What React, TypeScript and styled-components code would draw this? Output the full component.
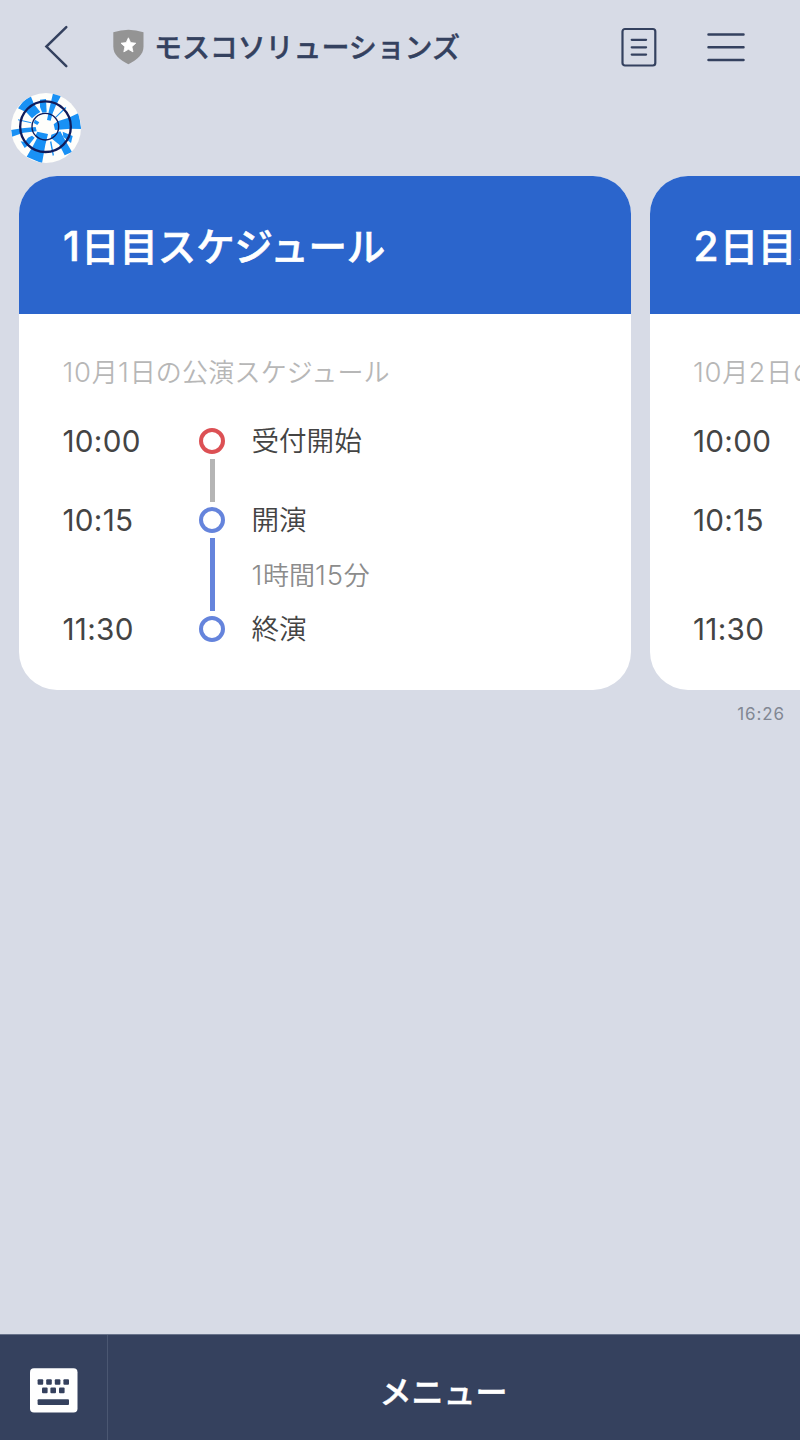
import React from 'react';
import styled, { createGlobalStyle } from 'styled-components';

const GlobalStyle = createGlobalStyle`
  * { box-sizing: border-box; }
  body {
    margin: 0;
    background: #d7dbe6;
    font-family: Inter, 'Noto Sans CJK JP', sans-serif;
    overflow: hidden;
  }
`;

const Screen = styled.div`
  width: 800px;
  height: 1440px;
  display: flex;
  flex-direction: column;
  overflow: hidden;
  background: #d7dbe6;
`;

const TopBar = styled.header`
  height: 93px;
  flex: none;
  display: flex;
  align-items: flex-start;
  padding: 25px 55px 0 44px;
  color: #34415f;
  svg { display: block; flex: none; }
`;

const Shield = styled.svg`
  margin: 4px 0 0 44px;
`;

const ChatName = styled.h1`
  margin: 1px auto 0 10px;
  font-size: 28px;
  line-height: 44px;
  font-weight: 500;
  letter-spacing: -0.1px;
  -webkit-text-stroke: 0.4px currentColor;
  white-space: nowrap;
`;

const Actions = styled.div`
  display: flex;
  gap: 50px;
  padding-top: 2px;
`;

const AvatarRow = styled.div`
  height: 82.5px;
  flex: none;
  padding-left: 11px;
`;

const Carousel = styled.div`
  display: flex;
  flex: none;
  gap: 19px;
  padding-left: 19px;
`;

const Card = styled.article`
  flex: none;
  width: 611.5px;
  height: 514.5px;
  border-radius: 38px;
  overflow: hidden;
  background: #fff;
`;

const CardHeader = styled.div`
  height: 138.5px;
  padding: 0 44px;
  display: flex;
  align-items: center;
  background: #2b65cc;
`;

const CardTitle = styled.h2`
  margin: 5px 0 0;
  color: #fff;
  font-size: 38.5px;
  line-height: 56px;
  font-weight: 500;
  letter-spacing: -0.15px;
  -webkit-text-stroke: 0.6px currentColor;
  white-space: nowrap;
`;

const TitleNum = styled.span`
  font-size: 40.5px;
  letter-spacing: 1.3px;
`;

const CardBody = styled.div`
  padding: 38px 43.4px 0;
`;

const Subtitle = styled.p`
  margin: 0 0 29px;
  color: #b7b7b7;
  font-size: 26px;
  line-height: 40px;
  height: 40px;
  font-weight: 350;
  letter-spacing: 0.2px;
  white-space: nowrap;
`;

const Num = styled.span`
  font-size: 27.5px;
  letter-spacing: 0.8px;
`;

const Step = styled.div`
  display: grid;
  grid-template-columns: 137px 26px 1fr;
  align-items: center;
  height: 40px;
  white-space: nowrap;
`;

const Gap = styled(Step)<{ $height: number }>`
  height: ${(p) => p.$height}px;
`;

const Time = styled.span`
  color: #444;
  font-size: 29.7px;
  line-height: 40px;
  font-weight: 400;
  letter-spacing: 0.3px;
`;

const Label = styled.span`
  margin-left: 26px;
  color: #444;
  font-size: 27.6px;
  line-height: 40px;
  font-weight: 350;
`;

const Duration = styled(Label)`
  color: #8c8c8c;
  font-size: 26px;
`;

const Ring = styled.i<{ $color: string }>`
  width: 26px;
  height: 26px;
  border: 4px solid ${(p) => p.$color};
  border-radius: 50%;
`;

const Line = styled.i<{ $color: string; $height: number }>`
  grid-column: 2;
  justify-self: center;
  width: 4.5px;
  height: ${(p) => p.$height}px;
  margin-top: -2px;
  background: ${(p) => p.$color};
`;

const SentAt = styled.time`
  align-self: flex-end;
  margin: 13px 15px 0 0;
  color: #818793;
  font-size: 17px;
  line-height: 22px;
  letter-spacing: 0.9px;
`;

const BottomBar = styled.footer`
  display: flex;
  flex: none;
  height: 106px;
  margin-top: auto;
  background: #35415e;
  border-top: 1px solid #68738b;
`;

const KeyboardButton = styled.div`
  width: 108px;
  padding: 33px 0 0 30px;
  border-right: 1px solid #4b5772;
`;

const MenuButton = styled.div`
  flex: 1;
  padding: 35px 21px 0 0;
  text-align: center;
  color: #fff;
  font-size: 32px;
  line-height: 46px;
  font-weight: 500;
  -webkit-text-stroke: 0.5px currentColor;
`;

const Avatar = () => (
  <svg width="70" height="70" viewBox="3 3 210 210">
    <defs>
      <clipPath id="disc"><circle cx="108" cy="108" r="105" /></clipPath>
    </defs>
    <circle cx="108" cy="108" r="105" fill="#fefefb" />
    <g clipPath="url(#disc)" fill="#1991f5">
      <path d="M24 49 40 28 62 12 72 36 91 60 80 67 66 79 49 61Z" />
      <path d="M130 0 154 10 138 40 128 64 122 86 111 84 118 50Z" />
      <path d="M90 23 108 21 110 61 97 62 90 45Z" />
      <path d="M206 63 214 111 182 110 135 114 131 97 143 88 176 77Z" />
      <path d="M82 119 114 126 106 158 96 214 50 194 70 160 81 139 76 132Z" />
      <path d="M3 114 36 109 77 105 80 118 40 122 6 134Z" />
      <path d="M124 128 151 118 163 140 186 180 164 190 148 158 122 137Z" />
      <path d="M66 131 74 137 59 156 44 168 32 148 45 150 54 137Z" />
      <path d="M158 119 188 132 183 153 160 135Z" />
      <path d="M75 83 88 91 82 99 71 93Z" />
      <path d="m166 45 3 3-31 29-2-2ZM24 82l40 9v3L24 85ZM120 149l4-1 8 42-4 1Z" />
    </g>
    <g fill="none" stroke="#101c5b">
      <circle cx="106.500" cy="104" r="76" strokeWidth="7" />
      <circle cx="106" cy="104" r="40" strokeWidth="4" />
    </g>
  </svg>
);

const BackIcon = () => (
  <svg width="25" height="44" viewBox="0 0 25 44" fill="none" stroke="currentColor" strokeWidth="2.5" strokeLinecap="round">
    <path d="M22.3 2.2 2.4 21.6 22.3 41.2" />
  </svg>
);

const NotesIcon = () => (
  <svg width="36" height="40" viewBox="0 0 36 40" fill="none" stroke="currentColor" strokeWidth="2.2" strokeLinecap="round">
    <rect x="1.5" y="2" width="32.8" height="36.5" rx="2.5" />
    <path d="M10.7 12.8h14.4M10.7 20.3h14.4M10.7 27.6h14.4" />
  </svg>
);

const MenuIcon = () => (
  <svg width="38" height="40" viewBox="0 0 38 40" fill="none" stroke="currentColor" strokeWidth="2.5" strokeLinecap="round">
    <path d="M1.5 7.4h35M1.5 20.2h35M1.5 33h35" />
  </svg>
);

const KeyboardIcon = () => (
  <svg width="48" height="45" viewBox="0 0 48 45">
    <rect x="0" y="0.3" width="47.5" height="44.2" rx="4" fill="#fff" />
    <g fill="#35415e">
      {[7.6, 16.2, 24.8, 33.4].map((x) => <rect key={x} x={x} y="11.2" width="5.6" height="5.6" rx="1" />)}
      {[12, 20.4, 29].map((x) => <rect key={x} x={x} y="19.6" width="5.6" height="5.6" rx="1" />)}
      <rect x="7.6" y="31.3" width="31.4" height="5.6" rx="1" />
    </g>
  </svg>
);

const GREY = '#b5b5b5';
const BLUE = '#6584dc';
const RED = '#dc5054';

const DayCard = ({ day }: { day: number }) => (
  <Card>
    <CardHeader><CardTitle><TitleNum>{day}</TitleNum>日目スケジュール</CardTitle></CardHeader>
    <CardBody>
      <Subtitle><Num>10</Num>月<Num>{day}</Num>日の公演スケジュール</Subtitle>
      <Step><Time>10:00</Time><Ring $color={RED} /><Label>受付開始</Label></Step>
      <Gap $height={39}><Line $color={GREY} $height={43} /></Gap>
      <Step><Time>10:15</Time><Ring $color={BLUE} /><Label>開演</Label></Step>
      <Gap $height={69}><Line $color={BLUE} $height={73} /><Duration><Num>1</Num>時間<Num>15</Num>分</Duration></Gap>
      <Step><Time>11:30</Time><Ring $color={BLUE} /><Label>終演</Label></Step>
    </CardBody>
  </Card>
);

export default function App() {
  return (
    <Screen>
      <GlobalStyle />
      <TopBar>
        <BackIcon />
        <Shield width="31" height="36" viewBox="0 0 31 36">
          <path d="M.3 3.2Q15.5-1.8 30.5 3.2V17.5C30.5 26 24 30.5 15.4 35.2 6.5 30.5.3 26 .3 17.5Z" fill="#949494" />
          <path d="m15.4 8.8 2.2 4.8 5.2.6-3.9 3.5 1.1 5.2-4.6-2.6-4.6 2.6 1.1-5.2L8 14.2l5.2-.6Z" fill="#fff" stroke="#fff" strokeWidth="0.8" />
        </Shield>
        <ChatName>モスコソリューションズ</ChatName>
        <Actions><NotesIcon /><MenuIcon /></Actions>
      </TopBar>
      <AvatarRow><Avatar /></AvatarRow>
      <Carousel>
        <DayCard day={1} />
        <DayCard day={2} />
      </Carousel>
      <SentAt>16:26</SentAt>
      <BottomBar>
        <KeyboardButton><KeyboardIcon /></KeyboardButton>
        <MenuButton>メニュー</MenuButton>
      </BottomBar>
    </Screen>
  );
}
